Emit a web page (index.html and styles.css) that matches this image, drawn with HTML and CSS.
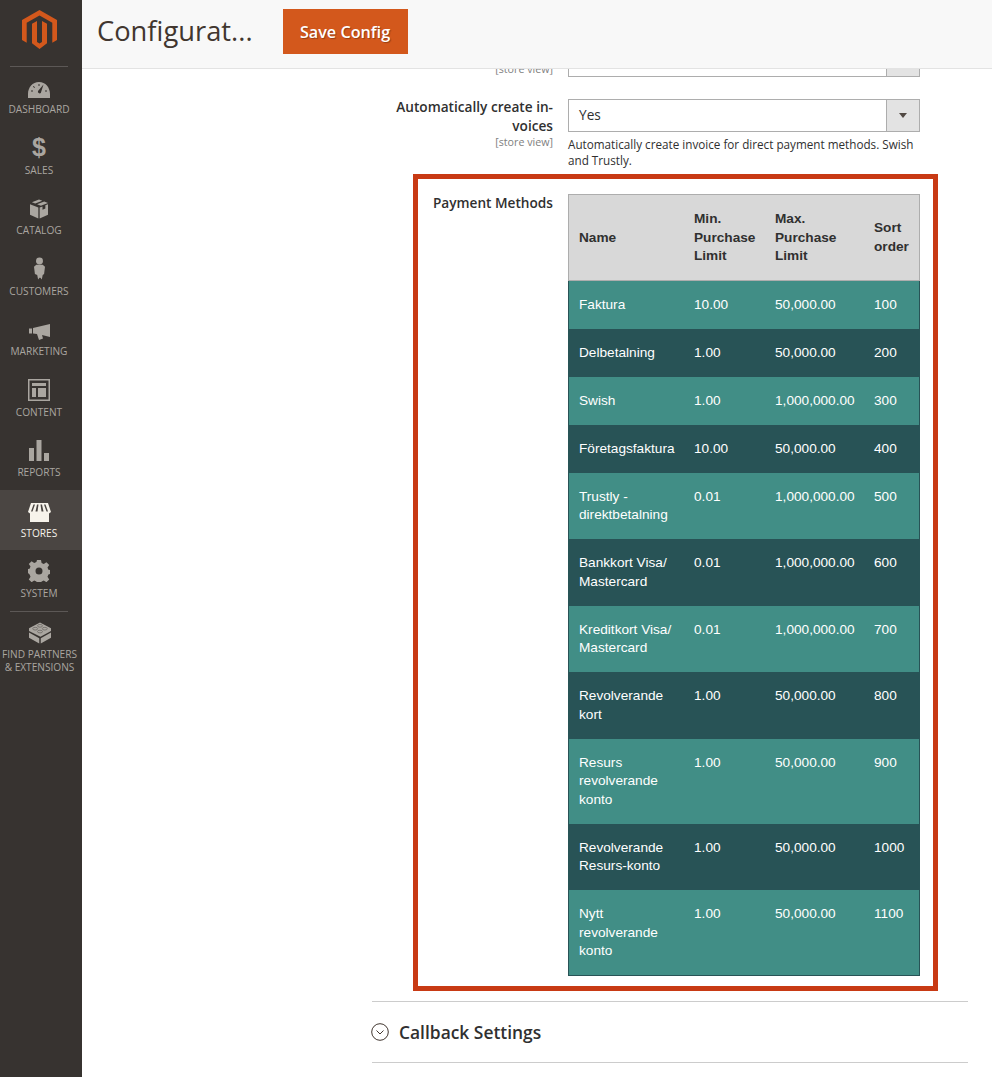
FILE: index.html
```html
<!DOCTYPE html>
<html lang="en">
<head>
    <meta charset="UTF-8">
    <title>Configuration</title>
    <link rel="stylesheet" href="styles.css">
</head>
<body>
    <nav class="menu">
        <div class="logo">
            <svg width="35" height="39" viewBox="0 0 35 39"><path fill="#d3581c" d="M17.500 0 35 10v20l-4.700 2.800V12.800L17.500 5.400 4.700 12.800v20L0 30V10zM15 11l-5 2.800v19.400l7.500 5.800 7.500-5.800V13.800L20 11v21l-2.500 1.500L15 32z"/></svg>
        </div>
        <a class="item">
            <svg width="22" height="16" viewBox="0 0 22 16"><path fill="#aaa6a0" fill-rule="evenodd" d="M11 0C4.500 0 0 5.500 0 12v4h22v-4C22 5.500 17.500 0 11 0zM10 9 15.500 2.500 12.800 11a1.800 1.800 0 0 1-2.800-2zM3 8.500h2v1H3zM5.500 4 7 5.300l-.7.7-1.400-1.400zM10.500 2h1v2h-1zM17 8.500h2v1h-2z"/></svg>
            <span>Dashboard</span>
        </a>
        <a class="item">
            <span class="dollar">$</span>
            <span>Sales</span>
        </a>
        <a class="item">
            <svg width="18" height="20" viewBox="0 0 19 20"><path fill="#aaa6a0" d="M9.500 0 13 1.300 5.500 4.300 2 3zM15 2.200 19 3.700 11.500 6.700 7.500 5.100zM0 5l8.800 3.500V20L0 16.200zM19 5v11.200L10.200 20V8.500l3-1.200v3.400l3-1.200V6.100z"/></svg>
            <span>Catalog</span>
        </a>
        <a class="item">
            <svg width="11" height="23" viewBox="0 0 12 24"><circle cx="6" cy="3.800" r="3.800" fill="#aaa6a0"/><path fill="#aaa6a0" d="M2.500 8h7L12 10l-1 8-1.500 1-1 5-1.500-2-1 0-1.500 2-1-5L1 18l-1-8z"/></svg>
            <span>Customers</span>
        </a>
        <a class="item">
            <svg width="21" height="16" viewBox="0 0 21 16"><path fill="#aaa6a0" d="M0 4.500h3v5H0zM4 4 21 0v13l-8-2 1 3.500-4 1.500-2-6-4-.5z"/></svg>
            <span>Marketing</span>
        </a>
        <a class="item">
            <svg width="22" height="22" viewBox="0 0 22 22"><path fill="#aaa6a0" fill-rule="evenodd" d="M0 0h22v22H0zM1.500 1.500v19h19v-19zM4 4h14v3H4zM4 9h4v9H4zM10 9h8v9h-8z"/></svg>
            <span>Content</span>
        </a>
        <a class="item">
            <svg width="20" height="21" viewBox="0 0 20 21"><path fill="#aaa6a0" d="M0 8h5v13H0zM7.500 0h5v21h-5zM15 13h5v8h-5z"/></svg>
            <span>Reports</span>
        </a>
        <a class="item active">
            <svg width="23" height="19" viewBox="0 0 23 19"><path fill="#f7f3eb" fill-rule="evenodd" d="M3 0h17l3 9-2 1.500V19H2v-8.500L0 9zM5.500 1.500 3 8.500h1.500L7 1.500zM9 1.500 7.500 8.500H9.500L10.500 1.500zM12.500 1.500 13.500 8.500h2L14 1.500zM16 1.500 18.500 8.500H20L17.500 1.500z"/></svg>
            <span>Stores</span>
        </a>
        <a class="item">
            <svg width="22" height="22" viewBox="0 0 22 22"><path fill="#aaa6a0" fill-rule="evenodd" d="M9 0h4l.6 3 2.200.9 2.600-1.700 2.800 2.800-1.700 2.600.9 2.200 1.600.2v4l-1.600.6-.9 2.200 1.700 2.600-2.800 2.800-2.600-1.700-2.200.9-.6 1.600H9l-.6-1.600-2.200-.9-2.600 1.700-2.800-2.800 1.700-2.600-.9-2.200L0 13V9l1.600-.2.900-2.200L.8 4 3.600 1.200l2.600 1.700L8.400 2zM11 7.500a3.500 3.500 0 1 0 0 7 3.500 3.500 0 0 0 0-7z"/></svg>
            <span>System</span>
        </a>
        <div class="sep"></div>
        <a class="item partners">
            <svg width="22" height="22" viewBox="0 0 23 22"><path fill="#aaa6a0" d="M11.500 0 23 6v3l-11 6L0 9V6zM0 10.500l10.700 6V22L0 16zM23 10.500V16l-10.700 6v-5.500z"/><g fill="none" stroke="#6b6763" stroke-width=".8"><ellipse cx="11.500" cy="3.500" rx="2.600" ry="1.400"/><ellipse cx="6.500" cy="6.500" rx="2.600" ry="1.400"/><ellipse cx="16.500" cy="6.500" rx="2.600" ry="1.400"/><ellipse cx="11.500" cy="9.500" rx="2.600" ry="1.400"/></g></svg>
            <span>Find Partners &amp; Extensions</span>
        </a>
    </nav>

    <div class="page">
        <header class="topbar">
            <h1>Configurat...</h1>
            <button class="save">Save Config</button>
        </header>

        <main class="content">
            <div class="row cut-row">
                <div class="field-label"><div class="scope">[store view]</div></div>
                <div class="fake-select"><span></span><i></i></div>
            </div>

            <div class="row invoices">
                <div class="field-label">
                    <label>Automatically create in-<br>voices</label>
                    <div class="scope">[store view]</div>
                </div>
                <div class="field-value">
                    <div class="fake-select"><span>Yes</span><i><b></b></i></div>
                    <p class="note">Automatically create invoice for direct payment methods. Swish and Trustly.</p>
                </div>
            </div>

            <div class="highlight">
                <div class="field-label">
                    <label>Payment Methods</label>
                </div>
                <table class="methods">
                    <thead>
                        <tr><th class="c-name">Name</th><th class="c-min">Min. Purchase Limit</th><th class="c-max">Max. Purchase Limit</th><th class="c-sort">Sort order</th></tr>
                    </thead>
                    <tbody>
                        <tr><td>Faktura</td><td>10.00</td><td>50,000.00</td><td>100</td></tr>
                        <tr><td>Delbetalning</td><td>1.00</td><td>50,000.00</td><td>200</td></tr>
                        <tr><td>Swish</td><td>1.00</td><td>1,000,000.00</td><td>300</td></tr>
                        <tr><td>Företagsfaktura</td><td>10.00</td><td>50,000.00</td><td>400</td></tr>
                        <tr><td>Trustly - direktbetalning</td><td>0.01</td><td>1,000,000.00</td><td>500</td></tr>
                        <tr><td>Bankkort Visa/ Mastercard</td><td>0.01</td><td>1,000,000.00</td><td>600</td></tr>
                        <tr><td>Kreditkort Visa/ Mastercard</td><td>0.01</td><td>1,000,000.00</td><td>700</td></tr>
                        <tr><td>Revolverande kort</td><td>1.00</td><td>50,000.00</td><td>800</td></tr>
                        <tr><td>Resurs revolverande konto</td><td>1.00</td><td>50,000.00</td><td>900</td></tr>
                        <tr><td>Revolverande Resurs-konto</td><td>1.00</td><td>50,000.00</td><td>1000</td></tr>
                        <tr><td>Nytt revolverande konto</td><td>1.00</td><td>50,000.00</td><td>1100</td></tr>
                    </tbody>
                </table>
            </div>

            <div class="section">
                <svg width="18" height="18" viewBox="0 0 18 18"><circle cx="9" cy="9" r="8.300" fill="none" stroke="#41362f" stroke-width="1"/><path fill="none" stroke="#41362f" stroke-width="1" d="M5.500 7.500 9 11l3.500-3.500"/></svg>
                <h2>Callback Settings</h2>
            </div>
        </main>
    </div>
</body>
</html>
```

FILE: styles.css
```css
/* Base */
html, body {
    margin: 0;
    padding: 0;
}

body {
    display: flex;
    height: 1077px;
    overflow: hidden;
    background-color: #fff;
    color: #303030;
    font-family: "Open Sans", sans-serif;
    font-size: 12px;
}

/* Left menu */
.menu {
    flex: 0 0 82px;
    background-color: #373330;
    display: flex;
    flex-direction: column;
    align-items: stretch;
}

.logo {
    display: flex;
    justify-content: center;
    height: 67px;
    padding: 10px 4px 0 0;
    margin-bottom: -1px;
    box-sizing: border-box;
    position: relative;
}

.logo::after {
    content: "";
    position: absolute;
    left: 10px;
    right: 14px;
    bottom: 0;
    height: 1px;
    background-color: #5c5856;
}

.sep {
    height: 1px;
    background-color: #5c5856;
    margin: 0 14px 0 10px;
}

.item {
    display: flex;
    flex-direction: column;
    align-items: center;
    justify-content: flex-end;
    height: 60.500px;
    padding: 0 4px 11.500px 0;
    box-sizing: border-box;
    color: #aaa6a0;
    font-size: 10.150px;
    line-height: 12px;
    text-transform: uppercase;
    text-align: center;
}

.item svg {
    margin-bottom: 5px;
}

.item.active {
    background-color: #4a4542;
    color: #f7f3eb;
}

.dollar {
    font-family: "Liberation Sans", sans-serif;
    font-weight: 700;
    font-size: 25px;
    line-height: 23px;
    margin-bottom: 5px;
}

.item.partners {
    height: auto;
    justify-content: flex-start;
    padding: 10px 3px 0 0;
    line-height: 13px;
}

.item.partners svg {
    margin-bottom: 4px;
}

/* Top bar */
.page {
    flex: 1;
    min-width: 0;
    display: flex;
    flex-direction: column;
}

.topbar {
    flex: 0 0 69px;
    box-sizing: border-box;
    display: flex;
    align-items: flex-start;
    gap: 30px;
    padding: 9px 0 0 15px;
    background-color: #f8f8f8;
    border-bottom: 1px solid #e3e3e3;
}

.topbar h1 {
    margin: 0;
    padding-top: 3px;
    font-size: 27.300px;
    line-height: 38px;
    font-weight: 400;
    color: #41362f;
}

.save {
    width: 125px;
    height: 45px;
    border: none;
    background-color: #d3581c;
    color: #fff;
    font-family: "Open Sans", sans-serif;
    font-size: 16.200px;
    font-weight: 600;
    text-shadow: 1px 1px 1px rgba(0, 0, 0, 0.3);
}

/* Config form */
.content {
    padding: 0 24px 0 290px;
}

.row {
    display: flex;
    gap: 15px;
}

.cut-row {
    height: 8px;
    overflow: hidden;
}

.cut-row .scope {
    margin-top: -6px;
}

.cut-row .fake-select {
    margin-top: -25px;
}

.scope {
    color: #808080;
    font-size: 10.700px;
    line-height: 12px;
    text-align: right;
}

.fake-select {
    box-sizing: border-box;
    flex: 0 0 352px;
    width: 352px;
    height: 33px;
    display: flex;
    border: 1px solid #adadad;
    background-color: #fff;
    font-size: 13.650px;
    line-height: 29px;
}

.fake-select span {
    flex: 1;
    padding-left: 10px;
}

.fake-select i {
    position: relative;
    width: 32px;
    background-color: #e3e3e3;
    border-left: 1px solid #adadad;
}

.fake-select b {
    position: absolute;
    left: 12px;
    top: 13px;
    border: 4px solid transparent;
    border-top: 5px solid #514943;
    border-bottom: none;
}

.invoices {
    margin-top: 22px;
}

.field-label {
    width: 181px;
    flex: 0 0 auto;
    text-align: right;
}

.field-label label {
    display: block;
    font-size: 13.650px;
    line-height: 19px;
    font-weight: 600;
    color: #303030;
}

.invoices label {
    margin-top: -2px;
    margin-bottom: 1px;
}

.field-value {
    width: 352px;
}

.note {
    margin: 4px 0 0;
    font-size: 11.700px;
    line-height: 16px;
    color: #303030;
}

/* Red frame around payment methods */
.highlight {
    display: flex;
    gap: 15px;
    width: 525px;
    margin: 6px 0 0 41px;
    padding: 15px 13px 10px 0;
    border: 5px solid #c83a14;
    box-sizing: border-box;
}

.highlight .field-label {
    flex: 0 0 135px;
    width: 135px;
}

.highlight .field-label label {
    margin-top: -1px;
}

/* Table */
.methods {
    flex: 0 0 351px;
    width: 351px;
    height: max-content;
    table-layout: fixed;
    border-collapse: collapse;
    font-family: "Liberation Sans", sans-serif;
    font-size: 13.650px;
    line-height: 18.500px;
    color: #fff;
}

.methods th {
    box-sizing: border-box;
    background-color: #d8d8d8;
    color: #303030;
    font-weight: 700;
    text-align: left;
    padding: 15px 8px 14px 10px;
    border: 1px solid #adadad;
}

.c-name { width: 115.500px; }
.c-min { width: 81px; }
.c-max { width: 99px; }
.c-sort { width: 55.500px; }

.methods th:not(:first-child) {
    border-left: none;
}

.methods th:not(:last-child) {
    border-right: none;
}

.methods td {
    padding: 15.250px 0 14.250px 10px;
    vertical-align: top;
    background-color: #418e86;
}

.methods tbody tr:nth-child(even) td {
    background-color: #285356;
}

.methods td:first-child {
    border-left: 1px solid #285356;
    padding-right: 8px;
}

.methods td:last-child {
    border-right: 1px solid #285356;
}

.methods tbody tr:last-child td {
    border-bottom: 1px solid #285356;
}

/* Collapsed section */
.section {
    display: flex;
    align-items: center;
    gap: 10px;
    margin-top: 10px;
    height: 62px;
    box-sizing: border-box;
    border-top: 1px solid #ccc;
    border-bottom: 1px solid #ccc;
}

.section svg {
    margin-left: -1px;
}

.section h2 {
    margin: 0 0 1px;
    font-size: 17.400px;
    font-weight: 600;
    color: #303030;
}
```
